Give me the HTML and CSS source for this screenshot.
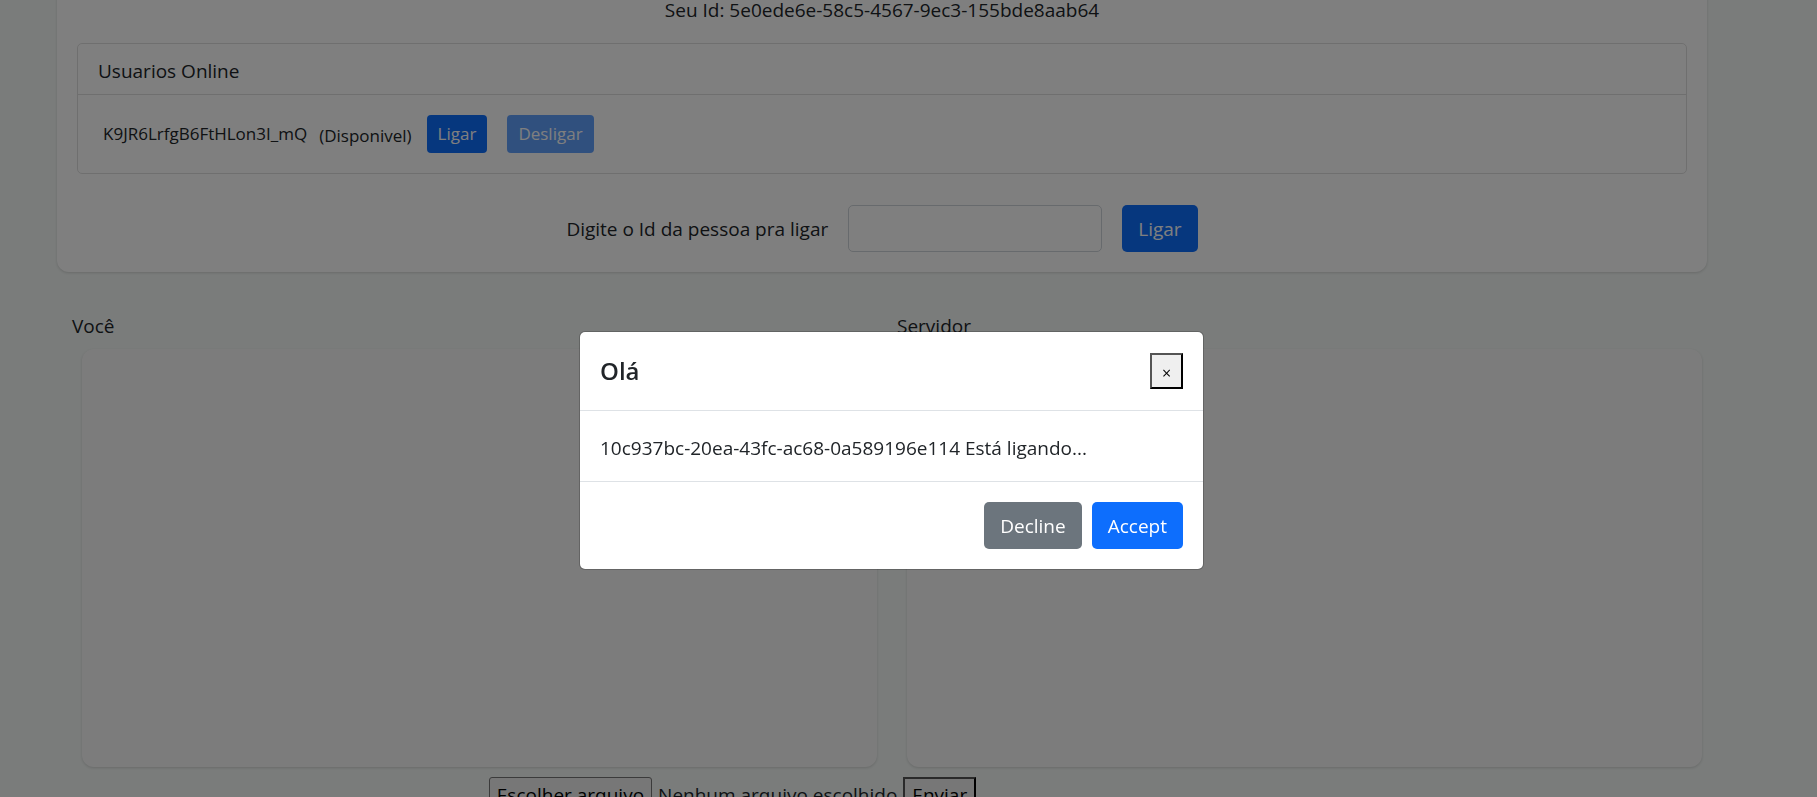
FILE: index.html
```html
<!DOCTYPE html>
<html lang="pt-BR">
<head>
<meta charset="utf-8">
<meta name="viewport" content="width=device-width, initial-scale=1">
<title>Chamada</title>
<link rel="stylesheet" href="styles.css">
</head>
<body>
<div class="page">
  <main class="container">
    <section class="panel">
      <p class="own-id">Seu Id: 5e0ede6e-58c5-4567-9ec3-155bde8aab64</p>
      <div class="users">
        <h2 class="users-title">Usuarios Online</h2>
        <div class="user">
          <span class="user-name">K9JR6LrfgB6FtHLon3I_mQ</span>
          <span class="user-status">(Disponivel)</span>
          <button type="button" class="btn btn-primary btn-small">Ligar</button>
          <button type="button" class="btn btn-primary btn-small" disabled>Desligar</button>
        </div>
      </div>
      <form class="call">
        <label for="peer">Digite o Id da pessoa pra ligar</label>
        <input id="peer" class="field" type="text">
        <button type="button" class="btn btn-primary">Ligar</button>
      </form>
    </section>
    <div class="videos">
      <section class="video-col">
        <p class="video-label">Você</p>
        <div class="video"></div>
      </section>
      <section class="video-col">
        <p class="video-label">Servidor</p>
        <div class="video"></div>
      </section>
    </div>
    <form class="upload">
      <input id="file" class="file-input" type="file">
      <label for="file" class="file-button">Escolher arquivo</label>
      <span>Nenhum arquivo escolhido</span>
      <button type="button" class="plain-button">Enviar</button>
    </form>
  </main>
</div>
<div class="backdrop">
  <div class="modal" role="dialog" aria-modal="true" aria-labelledby="modal-title">
    <header class="modal-header">
      <h1 id="modal-title" class="modal-title">Olá</h1>
      <button type="button" class="plain-button close" aria-label="Close">×</button>
    </header>
    <p class="modal-body">10c937bc-20ea-43fc-ac68-0a589196e114 Está ligando...</p>
    <footer class="modal-footer">
      <button type="button" class="btn btn-secondary">Decline</button>
      <button type="button" class="btn btn-primary">Accept</button>
    </footer>
  </div>
</div>
</body>
</html>
```
FILE: styles.css
```css
*,
*::before,
*::after {
  box-sizing: border-box;
}

body {
  margin: 0;
  overflow: hidden;
  background: #f5f9f7;
  color: #212529;
  font-family: "Segoe UI", "Open Sans", "Noto Sans", sans-serif;
  font-size: 19px;
  line-height: 30px;
}

button,
input {
  font: inherit;
}

h1,
h2,
p {
  margin: 0;
}

.page {
  height: 100vh;
  overflow: hidden;
  padding-right: 53px;
}

.container {
  max-width: 1650px;
  margin: 0 auto;
}

.panel {
  padding: 0 20px 20px;
  border-radius: 0 0 12px 12px;
  background: #fff;
  box-shadow: 0 1px 3px rgba(0, 0, 0, 0.15);
}

.own-id {
  margin-top: -5px;
  padding-bottom: 18px;
  text-align: center;
}

.users {
  border: 1px solid #dfdfdf;
  border-radius: 5px;
}

.users-title {
  padding: 12px 20px 8px;
  border-bottom: 1px solid #dfdfdf;
  font-size: 19px;
  font-weight: 400;
}

.user {
  display: flex;
  align-items: center;
  padding: 20px 25px;
  font-size: 17px;
}

.user-status {
  margin: 4px 15px 0 12px;
}

.btn {
  padding: 8px 15px 7px;
  border: 1px solid transparent;
  border-radius: 5px;
  color: #fff;
}

.btn-small {
  padding: 4px 10px;
  border-radius: 4px;
  line-height: 28px;
}

.btn-small + .btn-small {
  margin-left: 20px;
}

.btn-primary {
  background: #0d6efd;
}

.btn-primary:disabled {
  opacity: 0.65;
}

.btn-secondary {
  background: #6c757d;
}

.call {
  display: flex;
  justify-content: center;
  gap: 20px;
  padding-top: 31px;
}

.call label {
  padding-top: 9px;
}

.field {
  width: 254px;
  padding: 7px 15px;
  border: 1px solid #ced4da;
  border-radius: 5px;
  background: #fff;
}

.videos {
  display: grid;
  grid-template-columns: 1fr 1fr;
  padding-top: 39px;
}

.video-col {
  padding: 0 5px 0 15px;
}

.video {
  height: 418px;
  margin: 8px 0 0 10px;
  border-radius: 12px;
  background: #f9f9f9;
  box-shadow: 0 1px 3px rgba(0, 0, 0, 0.15);
}

.upload {
  display: flex;
  align-items: center;
  gap: 6px;
  width: max-content;
  margin: 10px auto 0;
  padding-right: 299px;
}

.file-input {
  position: absolute;
  opacity: 0;
  pointer-events: none;
}

.file-button {
  padding: 2px 7px;
  border: 1px solid #767676;
  border-radius: 3px;
  background: #efefef;
  color: #000;
}

.plain-button {
  padding: 1px 7px;
  border: 2px outset #000;
  background: #efefef;
  color: #000;
}

.backdrop {
  position: fixed;
  inset: 0;
  display: flex;
  align-items: center;
  justify-content: center;
  padding: 104px 34px 0 0;
  background: rgba(0, 0, 0, 0.5);
}

.modal {
  width: 625px;
  border: 1px solid rgba(0, 0, 0, 0.2);
  border-radius: 6px;
  background: #fff;
  background-clip: padding-box;
}

.modal-header {
  display: flex;
  align-items: center;
  justify-content: space-between;
  padding: 20px;
  border-bottom: 1px solid #dee2e6;
}

.modal-title {
  font-size: 24px;
  font-weight: 600;
  line-height: 38px;
}

.close {
  width: 33px;
  height: 36px;
  padding: 4px 0 0;
  font-size: 16px;
  line-height: 28px;
}

.modal-body {
  padding: 22px 20px 18px;
}

.modal-footer {
  display: flex;
  justify-content: flex-end;
  gap: 10px;
  padding: 20px;
  border-top: 1px solid #dee2e6;
}
```
